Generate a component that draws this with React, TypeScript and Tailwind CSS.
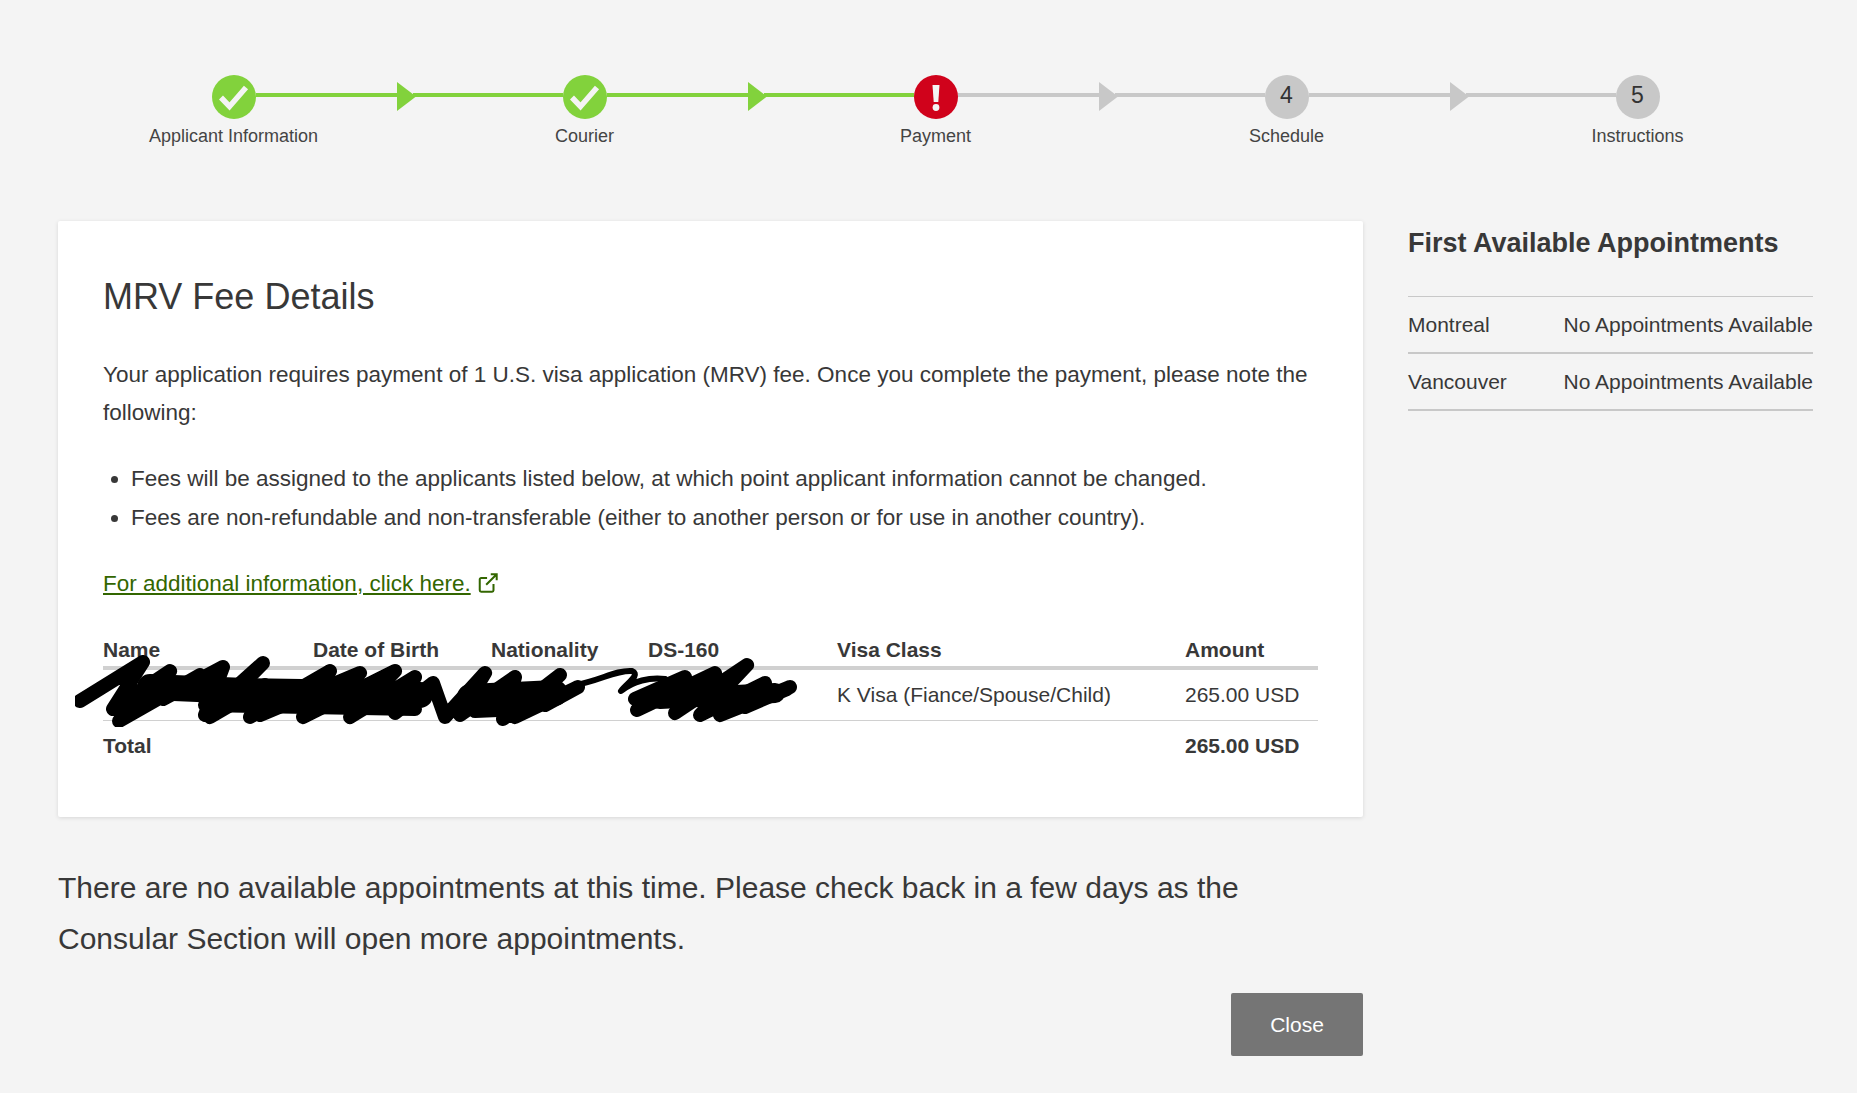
import React from "react";

const Check = () => (
  <svg viewBox="0 0 44 44" className="w-11 h-11 shrink-0">
    <circle cx="22" cy="22" r="22" fill="#82d23c" />
    <path d="M9 22.500l8.500 9L34 12.500" fill="none" stroke="#f4f4f4" strokeWidth="5.500" />
  </svg>
);

const Alert = () => (
  <svg viewBox="0 0 44 44" className="w-11 h-11 shrink-0">
    <circle cx="22" cy="22" r="22" fill="#d0021b" />
    <path d="M18.500 10h7l-1.200 17h-4.600z" fill="#f4f4f4" />
    <circle cx="22" cy="32.500" r="3.400" fill="#f4f4f4" />
  </svg>
);

const Num = ({ n }: { n: string }) => (
  <div className="w-11 h-11 shrink-0 rounded-full bg-[#c8c8c8] flex items-center justify-center text-[23px] text-[#333333] pb-[3px]">{n}</div>
);

const Connector = ({ color, fill }: { color: string; fill: string }) => (
  <div className="flex-1 flex items-center -mt-[4px]">
    <div className={`flex-1 h-1 ${color}`} />
    <svg viewBox="0 0 19 29" className="w-[19px] h-[29px] shrink-0 -ml-[9px] -mr-[3px] mt-[3px]">
      <path d="M0 0L19 14.500L0 29z" fill={fill} />
    </svg>
    <div className={`flex-1 h-1 ${color}`} />
  </div>
);

const steps = ["Applicant Information", "Courier", "Payment", "Schedule", "Instructions"];

export default function App() {
  return (
    <div className="min-h-[1093px] bg-[#f4f4f4] text-[#383838] font-['Liberation_Sans',Arial,sans-serif] pl-[58px] pr-[44px] pt-[75px]">
      <div className="px-[153.5px]">
        <div className="flex items-center">
          <Check />
          <Connector color="bg-[#82d23c]" fill="#82d23c" />
          <Check />
          <Connector color="bg-[#82d23c]" fill="#82d23c" />
          <Alert />
          <Connector color="bg-[#c8c8c8]" fill="#c8c8c8" />
          <Num n="4" />
          <Connector color="bg-[#c8c8c8]" fill="#c8c8c8" />
          <Num n="5" />
        </div>
      </div>
      <div className="grid grid-cols-5 text-center text-[18px] leading-[22px] mt-[6px] text-[#444444]">
        {steps.map((s) => (
          <div key={s}>{s}</div>
        ))}
      </div>

      <div className="flex gap-[45px] mt-[74px]">
        <div className="w-[1305px] shrink-0">
          <div className="bg-white rounded-[2px] shadow-[0_1px_4px_rgba(0,0,0,0.12)] h-[596px] px-[45px] pt-[54px]">
            <h1 className="text-[36px] leading-[44px] font-normal">MRV Fee Details</h1>
            <p className="text-[22.5px] leading-[38px] mt-[37px]">
              Your application requires payment of 1 U.S. visa application (MRV) fee. Once you complete the payment, please note the following:
            </p>
            <ul className="list-disc pl-[28px] mt-[27px] text-[22.5px] leading-[39px]">
              <li>Fees will be assigned to the applicants listed below, at which point applicant information cannot be changed.</li>
              <li>Fees are non-refundable and non-transferable (either to another person or for use in another country).</li>
            </ul>
            <div className="mt-[28px] text-[22.5px] leading-[38px]">
              <a className="underline text-[#336600]">For additional information, click here.</a>
              <svg viewBox="0 0 24 24" className="inline-block w-[22px] h-[22px] ml-[6px] align-[-3px]" fill="none" stroke="#336600" strokeWidth="2.200">
                <path d="M18 13v7a1.500 1.500 0 0 1-1.500 1.500h-12A1.500 1.500 0 0 1 3 20V8a1.500 1.500 0 0 1 1.500-1.500H11M10 14L21.500 2.500M15 2.500h6.500V9" />
              </svg>
            </div>
            <div className="relative mt-[32px] text-[21px]">
              <table className="w-[1215px] border-collapse">
                <thead>
                  <tr className="border-b-[4px] border-[#d0d0d0] text-left">
                    <th className="w-[210px] font-bold pb-[1px] leading-[30px]">Name</th>
                    <th className="w-[178px] font-bold leading-[30px] pb-[1px]">Date of Birth</th>
                    <th className="w-[157px] font-bold leading-[30px] pb-[1px]">Nationality</th>
                    <th className="w-[189px] font-bold leading-[30px] pb-[1px]">DS-160</th>
                    <th className="w-[348px] font-bold leading-[30px] pb-[1px]">Visa Class</th>
                    <th className="font-bold leading-[30px] pb-[1px]">Amount</th>
                  </tr>
                </thead>
                <tbody>
                  <tr className="border-b border-[#d0d0d0] h-[52px]">
                    <td colSpan={4} />
                    <td>K Visa (Fiance/Spouse/Child)</td>
                    <td>265.00 USD</td>
                  </tr>
                  <tr className="h-[50px] font-bold">
                    <td colSpan={5}>Total</td>
                    <td>265.00 USD</td>
                  </tr>
                </tbody>
              </table>
              <svg viewBox="0 0 725 72" className="absolute left-[-28px] top-[20px] w-[725px] h-[72px]" fill="none" stroke="#000000" strokeLinecap="round" strokeLinejoin="round">
                <path strokeWidth="14" d="M5 46L68 7L38 54L95 16L44 66L125 20L88 44L148 12L130 60L188 8L135 62L190 30L175 62L255 16L185 60L285 18L228 62L320 16L275 62L340 22L320 58L358 28L370 62L410 18L385 60L440 22L428 64L485 20L440 62L503 32L470 50" />
                <path strokeWidth="26" d="M75 32L170 36L290 38L345 40M395 42L480 38" />
                <path strokeWidth="14" d="M130 50L340 54M400 56L450 54" />
                <path strokeWidth="6" d="M500 30C525 26 540 15 557 16C566 20 552 28 546 36C558 26 575 22 590 24" />
                <path strokeWidth="14" d="M560 44L610 22L562 55L640 18L600 58L672 10L625 60L690 28L645 60L715 32L670 52L712 34" />
                <path strokeWidth="20" d="M585 44L700 38" />
              </svg>
            </div>
          </div>
          <p className="text-[30px] leading-[51px] mt-[45px]">
            There are no available appointments at this time. Please check back in a few days as the Consular Section will open more appointments.
          </p>
          <div className="flex justify-end mt-[29px]">
            <button className="w-[132px] h-[63px] rounded-[2px] bg-[#757575] text-white text-[21px]">Close</button>
          </div>
        </div>
        <div className="flex-1">
          <h2 className="text-[27px] font-bold leading-[36px] pb-[35px] pt-[4px]">First Available Appointments</h2>
          <div className="border-t border-[#c8c8c8] text-[21px]">
            <div className="flex justify-between items-center h-[57px] border-b-2 border-[#c8c8c8]">
              <span>Montreal</span>
              <span>No Appointments Available</span>
            </div>
            <div className="flex justify-between items-center h-[57px] border-b-2 border-[#c8c8c8]">
              <span>Vancouver</span>
              <span>No Appointments Available</span>
            </div>
          </div>
        </div>
      </div>
    </div>
  );
}
